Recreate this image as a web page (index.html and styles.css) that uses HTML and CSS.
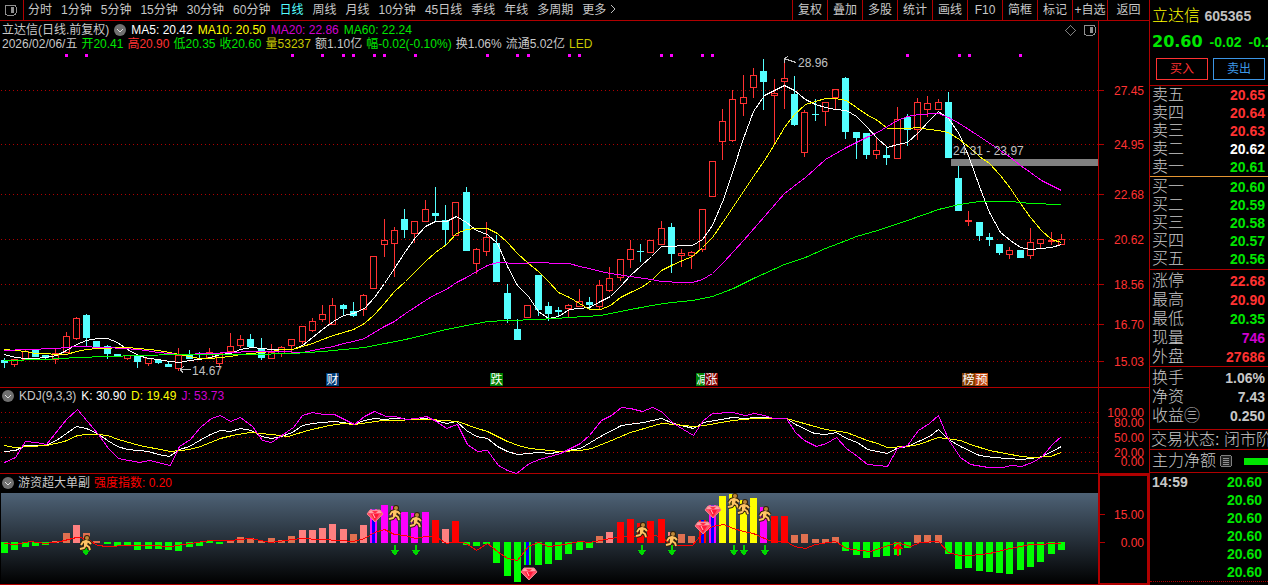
FILE: index.html
```html
<!DOCTYPE html>
<html lang="zh-CN">
<head>
	<title>立达信 605365</title>
	<meta charset="utf-8">
	<link rel="stylesheet" href="styles.css">
</head>
<body>
<svg class="defs" aria-hidden="true">
	<defs>
		<linearGradient id="fade" x1="0" y1="0" x2="0" y2="1">
			<stop offset="0" stop-color="#4e6276"/>
			<stop offset="1" stop-color="#000"/>
		</linearGradient>
		<g id="gem">
			<path d="M-5 -6H5L8 -2L0 6L-8 -2Z" fill="#ff5068"/>
			<path d="M-5 -6H5L7 -3H-7Z" fill="#ffa0a8"/>
			<path d="M-4 -2H4L0 5Z" fill="#ff1838"/>
			<path d="M-3 -5L-1 -3H1L3 -5Z" fill="#ff3048"/>
			<path d="M-5 -6H5L8 -2L0 6L-8 -2Z" fill="none" stroke="#f08088"/>
			<path d="M-2 -2L0 2" stroke="#ffc8c8"/>
		</g>
		<g id="man">
			<path d="M-5 1L-3 -2L0 -3L3 -2L5 0M0 -3V1L3 3L4 6M0 1L-2 4L-6 5" fill="none" stroke="#302008" stroke-width="4" stroke-linejoin="round"/>
			<circle cx="1" cy="-6" r="3" fill="#302008"/>
			<path d="M-5 1L-3 -2L0 -3L3 -2L5 0M0 -3V1L3 3L4 6M0 1L-2 4L-6 5" fill="none" stroke="#ffc464" stroke-width="2" stroke-linejoin="round"/>
			<path d="M-2 -3H2L1 2H-2Z" fill="#ffc464"/>
			<circle cx="1" cy="-6" r="2" fill="#c08838"/>
		</g>
		<path id="arrow" d="M-1 0H1V5H5L0 11L-5 5H-1Z"/>
		<g id="chevron">
			<circle cx="6" cy="6" r="6" fill="#707070"/>
			<path d="M3 5L6 8L9 5" fill="none" stroke="#ddd"/>
		</g>
		<g id="pane">
			<rect x="1" y="1" width="11" height="10" rx="2" fill="none" stroke="#909090"/>
			<rect x="7" y="3" width="3" height="6" fill="#909090"/>
		</g>
	</defs>
</svg>
<div class="app">
	<main class="main">
		<nav class="toolbar">
			<button class="side-toggle" aria-label="侧栏"><svg width="13" height="12"><use href="#pane"/></svg></button>
			<div class="periods">
				<button>分时</button><button>1分钟</button><button>5分钟</button><button>15分钟</button><button>30分钟</button><button>60分钟</button><button class="active">日线</button><button>周线</button><button>月线</button><button>10分钟</button><button>45日线</button><button>季线</button><button>年线</button><button>多周期</button><button>更多 <svg width="6" height="10"><path d="M1 1L5 5L1 9" fill="none" stroke="#c0c0c0"/></svg></button>
			</div>
			<div class="tools">
				<button>复权</button><button>叠加</button><button>多股</button><button>统计</button><button>画线</button><button>F10</button><button>简框</button><button>标记</button><button>+自选</button><button class="back">返回</button>
			</div>
		</nav>

		<section class="panel price">
			<div class="plot">
				<header class="info">
					<div class="row">
						<span>立达信(日线.前复权)</span>
						<button class="round" aria-label="展开"><svg width="12" height="12"><use href="#chevron"/></svg></button>
						<span class="white">MA5: 20.42</span>
						<span class="yellow">MA10: 20.50</span>
						<span class="purple">MA20: 22.86</span>
						<span class="green">MA60: 22.24</span>
						<span class="corner">
							<svg width="11" height="11"><path d="M5.5 .5L10.5 5.5L5.5 10.5L.5 5.5Z" fill="none" stroke="#808080"/></svg>
							<svg width="13" height="12"><use href="#pane"/></svg>
						</span>
					</div>
					<div class="row quote">
						<span>2026/02/06/五</span>
						<span class="green">开20.41</span>
						<span class="red">高20.90</span>
						<span class="green">低20.35</span>
						<span class="green">收20.60</span>
						<span class="gold">量53237</span>
						<span>额1.10亿</span>
						<span class="green">幅-0.02(-0.10%)</span>
						<span>换1.06%</span>
						<span>流通5.02亿</span>
						<span class="gold">LED</span>
					</div>
				</header>
				<svg class="chart" id="price"></svg>
			</div>
			<svg class="axis" id="price-axis"></svg>
		</section>

		<section class="panel kdj">
			<div class="plot">
				<header class="row">
					<button class="round" aria-label="展开"><svg width="12" height="12"><use href="#chevron"/></svg></button>
					<span>KDJ(9,3,3)</span>
					<span class="white">K: 30.90</span>
					<span class="yellow">D: 19.49</span>
					<span class="purple">J: 53.73</span>
				</header>
				<svg class="chart" id="kdj"></svg>
			</div>
			<svg class="axis" id="kdj-axis"></svg>
		</section>

		<section class="panel power">
			<div class="plot">
				<header class="row">
					<button class="round" aria-label="展开"><svg width="12" height="12"><use href="#chevron"/></svg></button>
					<span>游资超大单副</span>
					<span class="bright">强度指数: 0.20</span>
				</header>
				<svg class="chart" id="power"></svg>
			</div>
			<svg class="axis" id="power-axis"></svg>
		</section>
	</main>

	<aside class="side">
		<div class="head">
			<h1>立达信 <b>605365</b></h1>
			<p class="last"><strong>20.60</strong><span>-0.02</span><span>-0.10%</span></p>
			<div class="trade">
				<button class="buy">买入</button>
				<button class="sell">卖出</button>
			</div>
		</div>
		<table class="book asks">
			<tr><th>卖五</th><td class="red">20.65</td></tr>
			<tr><th>卖四</th><td class="red">20.64</td></tr>
			<tr><th>卖三</th><td class="red">20.63</td></tr>
			<tr><th>卖二</th><td class="white">20.62</td></tr>
			<tr><th>卖一</th><td class="green">20.61</td></tr>
		</table>
		<table class="book bids">
			<tr><th>买一</th><td class="green">20.60</td></tr>
			<tr><th>买二</th><td class="green">20.59</td></tr>
			<tr><th>买三</th><td class="green">20.58</td></tr>
			<tr><th>买四</th><td class="green">20.57</td></tr>
			<tr><th>买五</th><td class="green">20.56</td></tr>
		</table>
		<table class="book stats">
			<tr><th>涨停</th><td class="red">22.68</td></tr>
			<tr><th>最高</th><td class="red">20.90</td></tr>
			<tr><th>最低</th><td class="green">20.35</td></tr>
			<tr><th>现量</th><td class="purple">746</td></tr>
			<tr><th>外盘</th><td class="red">27686</td></tr>
		</table>
		<table class="book stats basics">
			<tr><th>换手</th><td>1.06%</td></tr>
			<tr><th>净资</th><td>7.43</td></tr>
			<tr><th>收益㊂</th><td>0.250</td></tr>
		</table>
		<p class="state">交易状态: 闭市阶段</p>
		<p class="flow">主力净额
			<svg width="12" height="12"><rect x=".5" y=".5" width="11" height="11" rx="2" fill="#222" stroke="#808080"/><path d="M3 3.5H9M3 5.5H9M3 7.5H9M3 9.5H9" stroke="#909090"/></svg>
			<i class="bar"></i>
		</p>
		<table class="book ticks">
			<tr><th>14:59</th><td class="green">20.60</td></tr>
			<tr><th></th><td class="green">20.60</td></tr>
			<tr><th></th><td class="green">20.60</td></tr>
			<tr><th></th><td class="green">20.60</td></tr>
			<tr><th></th><td class="green">20.60</td></tr>
			<tr><th></th><td class="green">20.60</td></tr>
		</table>
	</aside>
</div>
<script src="chart.js"></script>
</body>
</html>
```

FILE: styles.css
```css
* {
	box-sizing: border-box;
}
body {
	margin: 0;
	background: #000;
	color: #c8c8c8;
	font: 12px/14px "Liberation Sans", "Noto Sans CJK SC", sans-serif;
	overflow-x: hidden;
}
button {
	margin: 0;
	padding: 0;
	border: 0;
	background: none;
	color: inherit;
	font: inherit;
	white-space: nowrap;
	cursor: pointer;
}
p, h1 {
	margin: 0;
	white-space: nowrap;
}
svg {
	display: block;
	shape-rendering: crispEdges;
}
.defs {
	position: absolute;
	width: 0;
	height: 0;
}
#gem, #man {
	shape-rendering: auto;
}
.app {
	display: flex;
}
.main {
	flex: 1;
	min-width: 0;
}

.white { color: #fff; }
.yellow { color: #ff0; }
.gold { color: #c8c800; }
.purple { color: #d000d0; }
.green { color: #00e600; }
.red { color: #ff3232; }
.bright { color: #f00; }

/* toolbar */
.toolbar {
	display: flex;
	height: 21px;
	border-bottom: 1px solid #b00000;
}
.side-toggle {
	width: 24px;
	padding-left: 4px;
	border-right: 1px solid #b00000;
}
.periods {
	display: flex;
	flex: 1;
	gap: 9px;
	padding-left: 4px;
	min-width: 0;
	overflow: hidden;
}
.periods svg {
	display: inline-block;
}
.periods .active {
	color: #54ffff;
}
.tools {
	display: flex;
}
.tools button {
	width: 35px;
	border-left: 1px solid #b00000;
}
.tools .back {
	width: 42px;
}

/* chart panels */
.panel {
	display: flex;
	border-bottom: 1px solid #b00000;
}
.plot {
	flex: 1;
	min-width: 0;
}
.row {
	display: flex;
	align-items: center;
	gap: 5px;
	padding-left: 2px;
	white-space: nowrap;
}
.round {
	height: 12px;
	border-radius: 50%;
}
.round svg {
	shape-rendering: auto;
}
.info {
	height: 31px;
	padding-top: 2px;
}
.info .quote {
	gap: 4px;
}
.corner {
	display: flex;
	align-items: center;
	gap: 7px;
	margin-left: auto;
	padding-right: 2px;
}
.kdj header {
	height: 16px;
}
.power header {
	height: 19px;
	padding-bottom: 2px;
	gap: 4px;
}
.chart {
	width: 100%;
	overflow: visible;
}
#price { height: 335px; }
#kdj { height: 69px; }
#power { height: 91px; }
.axis {
	flex: none;
	width: 51px;
	border-left: 1px solid #b00000;
}
#price-axis { height: 366px; }
#kdj-axis { height: 85px; }
#power-axis {
	height: 110px;
	border: 2px solid #b00000;
	border-bottom-width: 1px;
}
.chart text {
	fill: #c0c0c0;
}
.chart .badge {
	fill: #fff;
}
.axis text {
	fill: #ff3232;
	text-anchor: end;
}
.grid {
	stroke: #b00000;
	stroke-dasharray: 1 3;
}

/* quote column */
.side {
	width: 119px;
	border-left: 1px solid #b00000;
	overflow: hidden;
}
.head {
	height: 86px;
	padding: 4px 3px 0 2px;
	border-bottom: 1px solid #b00000;
}
h1 {
	color: #ff0;
	font-size: 16px;
	font-weight: 300;
	line-height: 24px;
}
h1 b {
	color: #c0c0c0;
	font-size: 14px;
	font-weight: bold;
}
.last {
	display: flex;
	gap: 7px;
	color: #00e600;
	font-size: 14px;
	font-weight: bold;
	line-height: 28px;
}
.last strong {
	font: bold 16px/28px "DejaVu Sans", sans-serif;
}
.trade {
	display: flex;
	gap: 5px;
	margin: 2px 0 0 4px;
}
.trade button {
	flex: 1;
	height: 22px;
	border: 1px solid #ff3232;
	color: #ff3232;
}
.trade .sell {
	border-color: #3c96e6;
	color: #3c96e6;
}
.book {
	width: 100%;
	border-spacing: 0;
	border-bottom: 1px solid #b00000;
}
.book tr {
	height: 18px;
}
.book th, .book td {
	padding: 0;
	font-size: 16px;
	font-weight: 300;
	line-height: 18px;
	text-align: left;
	white-space: nowrap;
}
.book th {
	padding-left: 2px;
}
.book td {
	padding-right: 3px;
	font-size: 14px;
	font-weight: bold;
	text-align: right;
}
.asks {
	border-color: #e69632;
}
.bids {
	padding: 1px 0;
}
.stats {
	padding-top: 1px;
}
.stats tr {
	height: 19px;
}
.basics {
	border-bottom: 0;
}
.state {
	margin-top: 4px;
	padding-left: 1px;
	border-top: 1px solid #b00000;
	font-size: 16px;
	font-weight: 300;
	line-height: 19px;
}
.flow {
	display: flex;
	align-items: center;
	gap: 4px;
	padding-left: 2px;
	border: solid #b00000;
	border-width: 1px 0;
	font-size: 16px;
	font-weight: 300;
	line-height: 22px;
}
.bar {
	flex: 1;
	height: 7px;
	margin-left: 8px;
	background: #00e600;
}
.ticks {
	border-bottom-style: dotted;
}
.ticks th {
	font-size: 14px;
	font-weight: bold;
}
.ticks td {
	padding-right: 6px;
}
```

FILE: chart.js
```js
var NS = "http://www.w3.org/2000/svg";
var BASE = 1098;   // plot width the x values are measured in
var STEP = 10.26;  // distance between two days
var RED = "#ff3232", CYAN = "#54ffff";

// body top, body bottom, high, low, 1 = up / 0 = down
var candles = [
	[360,363,358,368,0],[359,364,359,366,1],[351,359,349,359,1],[350,357,350,357,0],[355,358,355,359,0],
	[353,359,348,363,1],[336,352,332,352,1],[318,338,317,339,1],[315,338,314,346,0],[341,347,341,347,0],
	[346,354,345,359,0],[354,356,354,356,0],[355,358,355,359,1],[356,362,356,368,0],[358,363,358,365,1],
	[360,363,359,364,0],[364,367,362,367,0],[355,368,348,370,1],[354,359,350,359,0],[354,355,352,359,0],
	[352,357,348,357,1],[353,363,353,367,1],[346,351,333,351,1],[339,345,335,347,1],[339,347,334,348,0],
	[349,358,338,360,0],[352,358,344,358,1],[347,353,346,356,1],[339,345,339,352,1],[326,341,326,343,1],
	[321,330,318,331,1],[314,319,305,321,1],[305,324,298,324,1],[305,309,304,315,0],[311,316,302,317,0],
	[295,309,294,315,1],[256,288,256,288,1],[240,244,219,256,1],[230,243,227,276,1],[219,230,209,238,0],
	[221,233,221,242,1],[209,221,200,221,1],[213,216,187,221,0],[220,230,205,246,0],[202,235,202,235,1],
	[192,251,187,251,0],[249,263,248,273,1],[237,251,222,255,1],[243,282,235,282,0],[293,319,284,323,0],
	[329,340,319,340,0],[305,317,305,317,1],[275,310,275,316,0],[306,314,302,321,0],[310,312,307,316,0],
	[305,308,304,316,1],[301,306,289,306,1],[302,305,297,309,0],[285,306,280,309,1],[278,290,267,291,1],
	[259,277,259,280,1],[249,259,240,267,1],[251,252,244,262,0],[240,252,240,252,1],[228,244,221,244,1],
	[227,254,223,273,0],[253,255,249,266,1],[252,255,251,268,1],[209,249,209,251,1],[161,196,161,196,1],
	[121,141,109,159,1],[99,140,90,141,1],[97,103,75,115,1],[75,87,68,97,1],[71,82,59,110,0],
	[93,95,79,142,1],[78,81,58,108,1],[94,125,76,126,0],[112,152,110,156,1],[114,115,99,121,0],
	[102,111,102,125,1],[89,97,89,109,1],[78,132,77,139,0],[132,138,132,159,0],[133,155,133,159,0],
	[150,154,138,158,1],[155,158,147,165,0],[119,158,107,158,1],[117,130,114,146,0],[102,129,98,139,1],
	[103,109,96,116,1],[102,109,99,109,1],[102,158,92,158,0],[178,211,166,211,0],[220,221,211,225,1],
	[222,236,222,241,0],[237,240,233,246,0],[244,253,244,255,0],[250,254,247,258,1],[250,258,250,258,0],
	[242,255,228,258,1],[239,243,239,247,1],[240,241,232,244,1],[239,244,234,244,1]
];

var ma5 = "4,354 15,357 25,358 35,358 45,357 56,355 66,350 76,344 86,340 97,338 107,338 117,342 127,349 138,355 148,358 158,359 169,361 179,362 189,360 199,359 210,357 220,354 230,353 240,349 251,347 261,348 271,349 281,349 292,349 302,345 312,337 322,329 333,321 343,315 353,313 364,308 374,297 384,283 394,268 405,251 415,237 425,226 435,221 446,221 456,216 466,222 476,230 487,234 497,243 507,266 517,285 528,296 538,311 548,318 558,316 569,309 579,308 589,307 600,301 610,296 620,286 630,275 641,265 651,256 661,246 671,246 682,245 692,245 702,239 712,225 723,199 733,169 743,138 753,111 764,95 774,90 784,85 794,90 805,99 815,104 825,107 835,109 846,110 856,116 866,126 877,138 887,147 897,144 907,142 918,132 928,121 938,111 948,118 959,134 969,158 979,186 989,212 1000,232 1010,240 1020,247 1030,249 1041,248 1051,247 1061,244";
var ma10 = "4,349 15,350 25,351 35,353 45,353 56,354 66,354 76,351 86,349 97,348 107,348 117,347 127,347 138,348 148,349 158,350 169,352 179,354 189,356 199,358 210,358 220,357 230,356 240,354 251,353 261,352 271,351 281,349 292,349 302,346 312,343 322,339 333,335 343,332 353,329 364,323 374,314 384,303 394,291 405,281 415,271 425,261 435,252 446,244 456,233 466,229 476,228 487,228 497,233 507,242 517,253 528,263 538,271 548,281 558,292 569,297 579,303 589,309 600,309 610,305 620,297 630,292 641,287 651,280 661,270 671,265 682,260 692,256 702,247 712,237 723,221 733,206 743,191 753,176 764,160 774,144 784,127 794,114 805,104 815,101 825,98 835,98 846,100 856,107 866,114 877,120 887,128 897,128 907,128 918,127 928,129 938,130 948,132 959,139 969,147 979,156 989,163 1000,175 1010,188 1020,203 1030,217 1041,230 1051,239 1061,242";
var ma20 = "4,350 25,349 56,348 76,346 107,347 138,349 158,352 179,354 210,353 230,352 251,351 281,351 302,352 322,348 333,346 343,343 353,341 364,338 384,326 394,321 405,313 425,300 435,294 446,289 456,282 466,277 476,271 487,265 497,262 517,263 538,262 558,263 569,263 579,266 589,268 600,271 610,273 630,276 651,279 661,281 682,282 692,282 702,279 712,273 723,262 743,240 764,216 784,193 805,177 825,159 846,147 866,137 877,132 887,126 897,120 907,116 918,114 938,113 948,117 959,123 979,136 1000,150 1010,157 1020,165 1030,172 1041,180 1061,190";
var ma60 = "4,360 45,359 76,357 107,356 138,355 179,354 250,354 292,353 322,351 364,347 405,339 446,329 466,325 487,321 507,320 538,319 569,317 600,315 620,311 651,305 671,302 692,300 712,296 733,288 753,278 784,264 805,257 825,248 846,240 856,236 877,230 907,220 938,209 959,204 979,201 1010,201 1030,203 1061,204";

var lineK = "4,451 15,450 25,445 45,445 56,440 66,433 76,426 86,428 97,433 107,440 117,446 127,449 138,450 148,451 158,454 169,456 179,449 189,446 199,440 210,434 220,430 230,431 240,428 251,430 261,436 271,438 281,436 292,432 302,425 312,423 322,422 333,421 343,422 353,424 364,420 374,418 384,419 394,418 415,419 425,418 435,420 446,423 456,421 466,430 476,436 487,438 497,446 507,451 517,454 528,453 538,452 550,453 568,450 580,448 600,436 621,425 643,422 661,418 673,423 693,428 703,422 732,417 745,418 754,417 786,418 795,424 814,433 825,434 836,432 846,438 857,442 867,449 887,453 896,448 907,446 929,436 938,429 948,439 960,446 979,455 993,457 1021,459 1031,458 1042,456 1061,446";
var lineD = "4,445 14,447 46,445 64,441 77,435 86,434 98,434 107,435 118,439 139,445 170,451 189,449 200,446 220,438 232,435 250,432 271,434 288,436 307,430 329,425 343,423 354,424 382,420 429,419 457,421 477,428 487,431 507,441 518,445 529,448 560,451 580,450 591,448 611,440 630,432 661,423 675,424 693,426 704,425 732,420 754,418 786,418 825,429 846,432 867,440 877,443 887,447 907,446 918,444 938,437 960,440 970,444 989,450 1021,456 1032,457 1050,456 1061,452";
var lineJ = "4,462 15,457 25,441 36,442 46,444 66,419 77,409 87,421 98,434 108,448 118,458 139,462 149,460 170,465 179,446 190,439 200,427 211,418 220,415 230,421 240,417 252,426 262,440 271,442 293,427 302,415 312,412 323,414 334,414 354,424 364,416 374,411 386,416 395,416 405,419 416,418 426,416 436,421 446,428 457,424 467,444 477,451 487,450 498,465 507,470 516,473 529,463 539,459 560,453 580,443 589,435 601,420 611,415 621,407 630,408 642,411 652,407 661,411 673,423 693,435 703,420 712,413 732,412 745,415 754,413 764,415 773,418 786,418 795,432 804,440 816,446 826,443 836,437 846,448 857,456 867,464 887,466 897,448 907,445 918,430 929,423 938,415 948,439 960,457 970,464 988,467 1002,467 1011,465 1021,466 1032,462 1042,456 1052,444 1061,436";

// bar end and colour: g green, c coral, s salmon, r red, m magenta, y yellow; upper case adds the blue core
var bars = "553g 550g 547g 546g 545g 541c 533c 525s 533c 541c 544g 546g 546g 550g 549g 549g 550g 551g 547g 546g 541g 544g 540c 537c 538c 541c 538c 540c 536c 530s 530s 528s 524s 529s 534c 525s 509M 505m 506m 512m 513m 512m 520r 529s 521r 545g 546g 544g 563g 576g 582g 565G 565g 564g 560g 554g 550g 548g 536c 532s 522r 519r 523r 521r 519r 532s 534c 536c 520R 505M 496y 494y 500y 498y 507m 516r 516r 535c 534c 539c 539c 537c 551g 555g 558g 557g 556g 555g 548g 535c 535c 535c 554g 569g 568g 571g 572g 573g 574g 570g 567g 562g 554g 550g".split(" ");
var colors = {g: "#00ff00", c: "#e07050", s: "#ff8080", r: "#ff0000", m: "#ff00ff", y: "#ffff00"};
var force = "4,543 15,544 30,541 45,543 60,541 76,537 86,538 97,545 107,546 127,545 150,545 170,546 190,543 210,540 230,540 250,538 270,542 300,538 320,539 340,540 353,541 364,538 374,532 384,529 394,534 405,535 415,538 425,536 435,536 446,543 456,541 466,543 476,550 487,543 497,551 507,558 517,560 528,546 538,542 548,546 558,545 569,543 579,541 589,542 600,540 610,538 630,535 641,538 651,535 661,536 671,545 692,545 702,533 712,526 723,524 733,528 743,531 753,533 764,538 774,542 784,540 794,546 805,548 815,544 835,541 846,548 860,550 870,551 897,542 910,546 920,542 938,541 948,552 959,555 970,555 989,553 1010,548 1030,544 1061,543";

function add(parent, name, attrs, text) {
	var el = document.createElementNS(NS, name);
	for (var key in attrs) el.setAttribute(key, attrs[key]);
	if (text) el.textContent = text;
	parent.appendChild(el);
	return el;
}

function start(id, top) {
	var svg = document.getElementById(id);
	svg.innerHTML = "";
	var w = svg.clientWidth, h = svg.clientHeight;
	svg.setAttribute("viewBox", "0 " + top + " " + w + " " + h);
	svg.k = w / BASE;
	return svg;
}

function line(svg, points, color) {
	var pts = points.split(" ").map(function (p) {
		var xy = p.split(",");
		return (xy[0] * svg.k + 0.5) + "," + (+xy[1] + 0.5);
	}).join(" ");
	add(svg, "polyline", {points: pts, fill: "none", stroke: color});
}

function grid(svg, rows) {
	rows.forEach(function (y) {
		add(svg, "line", {x1: 1, x2: svg.clientWidth, y1: y + 0.5, y2: y + 0.5, "class": "grid"});
	});
}

function day(svg, i) {
	return Math.round((4 + i * STEP) * svg.k);
}

function drawPrice() {
	var svg = start("price", 52);
	grid(svg, [90, 144, 194, 239, 284, 324, 361]);
	[65,85,291,321,342,352,373,383,414,486,516,527,568,578,660,670,701,711,906,958,968,1019].forEach(function (x) {
		add(svg, "rect", {x: x * svg.k, y: 54, width: 3, height: 3, fill: "#f0f"});
	});
	candles.forEach(function (c, i) {
		var x = day(svg, i);
		var color = c[4] ? RED : CYAN;
		if (c[4]) {
			add(svg, "path", {d: "M" + (x + 0.5) + " " + c[2] + "V" + c[0] + "M" + (x + 0.5) + " " + c[1] + "V" + (c[3] + 1), stroke: color});
			add(svg, "rect", {x: x - 2.5, y: c[0] + 0.5, width: 6, height: c[1] - c[0], fill: "none", stroke: color});
		} else {
			add(svg, "rect", {x: x, y: c[2], width: 1, height: c[3] - c[2], fill: color});
			add(svg, "rect", {x: x - 3, y: c[0], width: 7, height: c[1] - c[0], fill: color});
		}
	});
	add(svg, "rect", {x: 951 * svg.k, y: 159, width: 147 * svg.k, height: 7, fill: "#808080"});
	line(svg, ma5, "#fff");
	line(svg, ma10, "#ff0");
	line(svg, ma20, "#f0f");
	line(svg, ma60, "#0f0");
	add(svg, "path", {d: "M" + 784 * svg.k + " 58.5l12 4m-12 -4l4 -2m-4 2l1 4", fill: "none", stroke: "#c0c0c0"});
	add(svg, "text", {x: 798 * svg.k, y: 67}, "28.96");
	add(svg, "path", {d: "M" + 180 * svg.k + " 369.5h11m-11 0l4 -3m-4 3l3 3", fill: "none", stroke: "#c0c0c0"});
	add(svg, "text", {x: 192 * svg.k, y: 375}, "14.67");
	add(svg, "text", {x: 953 * svg.k, y: 155}, "24.31 - 23.97");
	[[326, "财", "#003c78"], [490, "跌", "#008000"], [696, "减", "#008000"], [705, "涨", "#800000"], [962, "榜", "#803c00"], [975, "预", "#c04810"]].forEach(function (b) {
		add(svg, "rect", {x: b[0] * svg.k, y: 373, width: 13, height: 13, fill: b[2]});
		add(svg, "text", {x: b[0] * svg.k + 0.5, y: 384, "class": "badge"}, b[1]);
	});
}

function drawKdj() {
	var svg = start("kdj", 404);
	grid(svg, [412, 422, 437, 452, 461]);
	line(svg, lineK, "#fff");
	line(svg, lineD, "#ff0");
	line(svg, lineJ, "#f0f");
}

function drawPower() {
	var svg = start("power", 493);
	add(svg, "rect", {x: 1, y: 493, width: svg.clientWidth - 1, height: 91, fill: "url(#fade)"});
	bars.forEach(function (bar, i) {
		var end = parseInt(bar, 10), type = bar.slice(-1), kind = type.toLowerCase();
		var x = day(svg, i), y = end < 543 ? end : 542, h = Math.abs(543 - end) + (end < 543 ? 0 : 1);
		add(svg, "rect", {x: x - 3, y: y, width: 7, height: h, fill: colors[kind]});
		if (type != kind) add(svg, "rect", {x: x - 1, y: y, width: 3, height: h, fill: "#00f"});
	});
	line(svg, force, "#f00");
	[86, 395, 416, 642, 672, 734, 744, 765].forEach(function (x) {
		add(svg, "use", {href: "#arrow", x: x * svg.k, y: 544.5, fill: "#00d800"});
	});
	add(svg, "path", {d: "M" + 898 * svg.k + " 543l-5 6h4v7h2v-7h4z", fill: "#f00"});
	[[375, 516], [529, 574], [703, 528], [713, 512]].forEach(function (p) {
		add(svg, "use", {href: "#gem", x: p[0] * svg.k, y: p[1]});
	});
	[[86, 544], [395, 514], [416, 521], [642, 531], [672, 540], [734, 502], [744, 508], [765, 515]].forEach(function (p) {
		add(svg, "use", {href: "#man", x: p[0] * svg.k, y: p[1]});
	});
}

function drawAxis(id, top, right, labels, ticks) {
	var svg = start(id, top);
	labels.forEach(function (l) {
		if (ticks) add(svg, "line", {x1: 0, x2: 5, y1: l[0] + 0.5, y2: l[0] + 0.5, stroke: "#b00000"});
		add(svg, "text", {x: right, y: l[0] + 5}, l[1]);
	});
}

function draw() {
	drawPrice();
	drawKdj();
	drawPower();
	drawAxis("price-axis", 21, 45, [[90, "27.45"], [144, "24.95"], [194, "22.68"], [239, "20.62"], [284, "18.56"], [324, "16.70"], [361, "15.03"]], true);
	drawAxis("kdj-axis", 388, 45, [[412, "100.00"], [422, "80.00"], [437, "50.00"], [452, "20.00"], [461, "0.00"]], false);
	drawAxis("power-axis", 476, 44, [[514, "15.00"], [542, "0.00"]], true);
}

draw();
window.onresize = draw;
```
